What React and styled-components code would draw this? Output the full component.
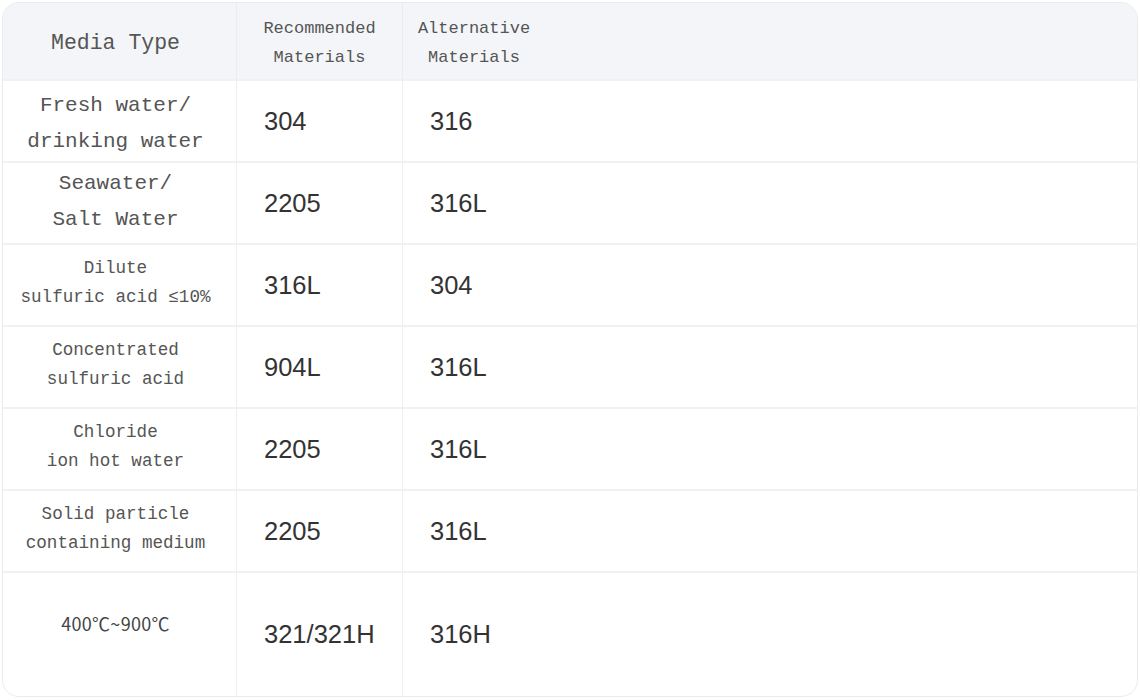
import styled, { createGlobalStyle } from "styled-components";

const GlobalStyle = createGlobalStyle`
  html, body {
    margin: 0;
    padding: 0;
    background: #ffffff;
  }
  body {
    font-family: "Liberation Sans", Arial, sans-serif;
  }
`;

const Page = styled.div`
  width: 1140px;
  height: 700px;
  padding: 2px 2px 3px 2px;
  box-sizing: border-box;
`;

const Card = styled.div`
  height: 100%;
  box-sizing: border-box;
  border: 1.5px solid #ebebed;
  border-radius: 17px;
  overflow: hidden;
  display: grid;
  grid-template-columns: 234px 166px 1fr;
  grid-template-rows: 76px repeat(6, 82px) 1fr;
  background: #ffffff;
`;

const HeadCell = styled.div`
  background: #f4f5f8;
  border-right: ${({ $last }) => ($last ? "none" : "1px solid #ebecef")};
  display: flex;
  align-items: center;
  justify-content: ${({ $align }) => ($align === "left" ? "flex-start" : "center")};
  padding-left: ${({ $align }) => ($align === "left" ? "6px" : "0")};
  padding-right: ${({ $big }) => ($big ? "8px" : "0")};
  padding-top: 4px;
  color: #555555;
  font-family: "Liberation Mono", "DejaVu Sans Mono", monospace;
  font-size: ${({ $big }) => ($big ? "21.5px" : "17px")};
  line-height: 29px;
  text-align: center;
  box-sizing: border-box;
`;

const HeadText = styled.div`
  width: ${({ $w }) => ($w ? `${$w}px` : "auto")};
  text-align: center;
`;

const Cell = styled.div`
  border-top: 2px solid #f1f1f3;
  border-right: ${({ $last }) => ($last ? "none" : "1px solid #efeff1")};
  display: flex;
  align-items: center;
  box-sizing: border-box;
`;

// first column: media name, centred, two lines
const MediaCell = styled(Cell)`
  justify-content: center;
  text-align: center;
  color: #555555;
  font-family: "Liberation Mono", "DejaVu Sans Mono", monospace;
  font-size: ${({ $size }) => ($size === "big" ? "21px" : "17.6px")};
  line-height: ${({ $size }) => ($size === "big" ? "36px" : "29px")};
  padding-right: 8px;
  padding-top: ${({ $drop }) => ($drop ? `${$drop}px` : "0")};
  padding-bottom: ${({ $lift }) => ($lift !== undefined ? `${$lift}px` : "4px")};
`;

const TempText = styled.span`
  font-family: "Noto Sans CJK SC", "DejaVu Sans", sans-serif;
  font-size: 18px;
  letter-spacing: 0.3px;
  color: #444444;
`;

const ValueCell = styled(Cell)`
  padding-left: 27px;
  color: #333333;
  font-family: "Liberation Sans", Arial, sans-serif;
  font-size: 25.5px;
`;

const rows = [
  { media: ["Fresh water/", "drinking water"], size: "big", lift: 0, drop: 6, rec: "304", alt: "316" },
  { media: ["Seawater/", "Salt Water"], size: "big", lift: 2, rec: "2205", alt: "316L" },
  { media: ["Dilute", "sulfuric acid ≤10%"], rec: "316L", alt: "304" },
  { media: ["Concentrated", "sulfuric acid"], rec: "904L", alt: "316L" },
  { media: ["Chloride", "ion hot water"], rec: "2205", alt: "316L" },
  { media: ["Solid particle", "containing medium"], rec: "2205", alt: "316L" },
];

export default function App() {
  return (
    <Page>
      <GlobalStyle />
      <Card>
        <HeadCell $big>
          <HeadText>Media Type</HeadText>
        </HeadCell>
        <HeadCell>
          <HeadText>
            Recommended
            <br />
            Materials
          </HeadText>
        </HeadCell>
        <HeadCell $align="left" $last>
          <HeadText $w={130}>
            Alternative
            <br />
            Materials
          </HeadText>
        </HeadCell>

        {rows.map((r) => (
          <>
            <MediaCell key={r.media[0]} $size={r.size} $lift={r.lift} $drop={r.drop}>
              <div>
                {r.media[0]}
                <br />
                {r.media[1]}
              </div>
            </MediaCell>
            <ValueCell key={r.media[0] + "-rec"}>{r.rec}</ValueCell>
            <ValueCell key={r.media[0] + "-alt"} $last>
              {r.alt}
            </ValueCell>
          </>
        ))}

        <MediaCell $lift={22}>
          <TempText>400℃~900℃</TempText>
        </MediaCell>
        <ValueCell>321/321H</ValueCell>
        <ValueCell $last>316H</ValueCell>
      </Card>
    </Page>
  );
}
